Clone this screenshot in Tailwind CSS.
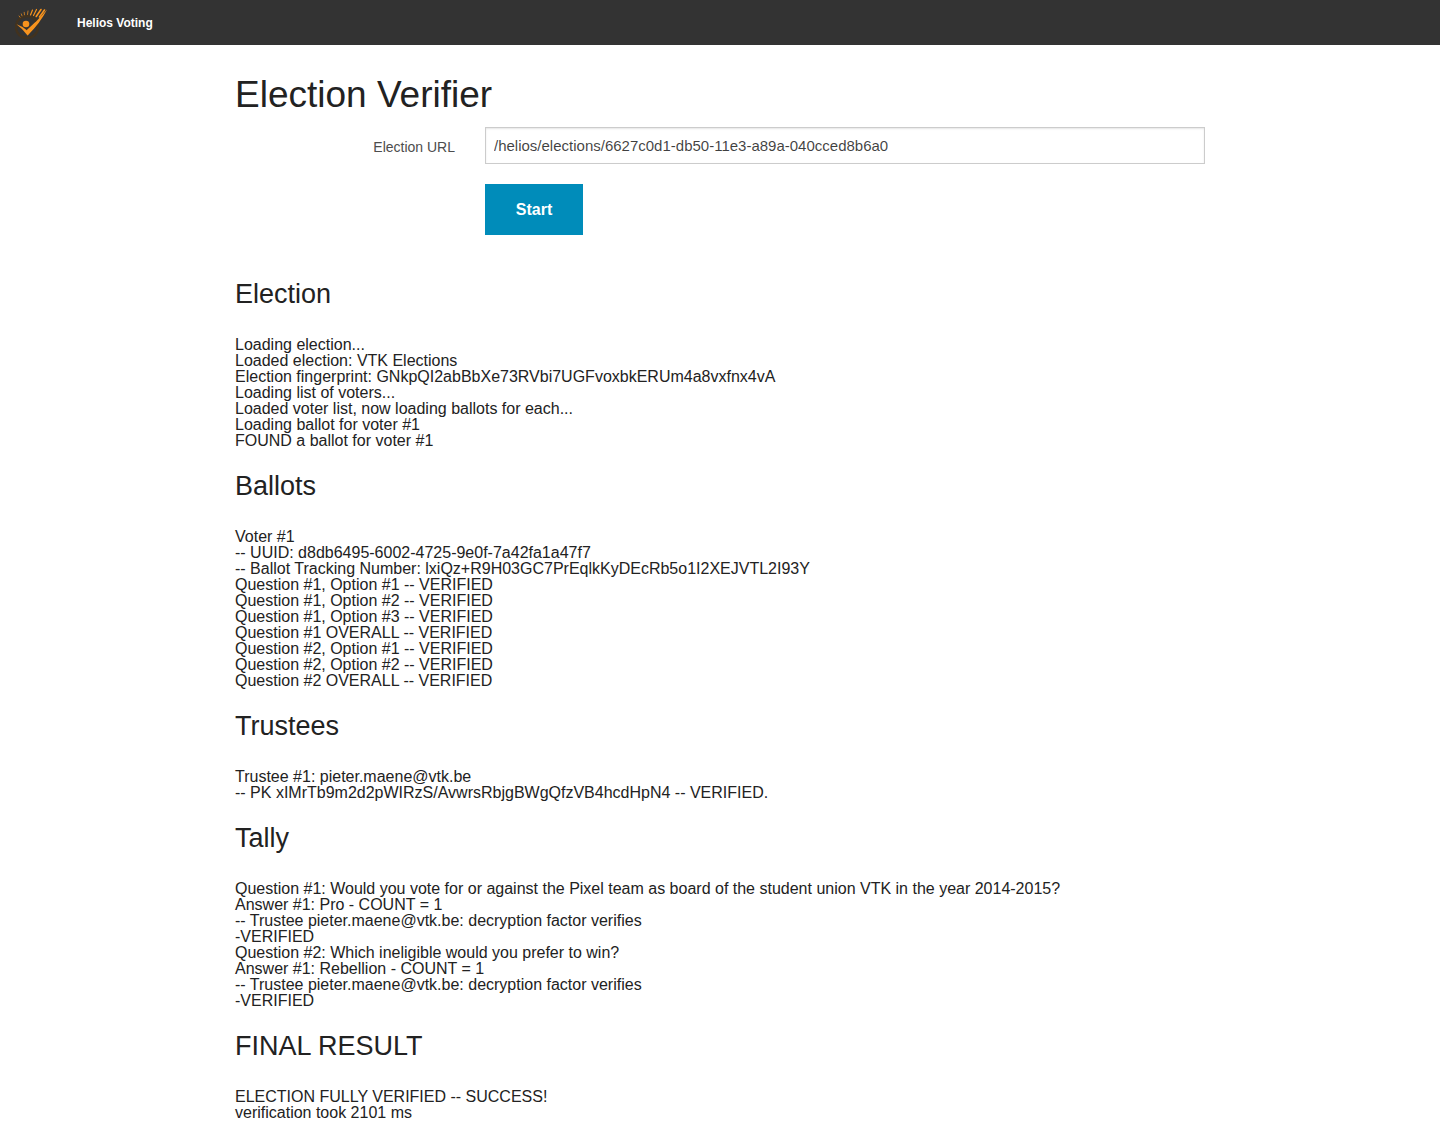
<!DOCTYPE html>
<html lang="en">
<head>
<meta charset="utf-8">
<meta name="viewport" content="width=device-width, initial-scale=1">
<title>Election Verifier</title>
<script src="https://cdn.jsdelivr.net/npm/@tailwindcss/browser@4"></script>
</head>
<body class="bg-white font-['Liberation_Sans',Arial,sans-serif] text-base text-[#222]">
<nav class="flex h-[45px] items-center bg-[#333]">
  <a href="#" aria-label="Helios" class="ml-[15px] h-[38px] w-[34px]">
    <svg class="h-[38px] w-[34px]" viewBox="0 0 34 38">
      <circle cx="12" cy="23" r="11" fill="none" stroke="#41321f" stroke-width="2.5"/>
      <circle cx="11" cy="20" r="3.3" fill="#f7931e"/>
      <path fill="#f7931e" d="M1.5 20.2Q7 22 11.8 26.2Q20 19.5 32 5.5Q25 19.5 12.5 31.5Q7.5 24.500 1.500 20.200Z"/>
      <path fill="#f7931e" d="M12 26L20 18.500L24 17.500L12.500 31.500Z"/>
      <g stroke="#f7931e" stroke-linecap="round" fill="none">
        <path stroke-width="1.6" d="M21.2 12.5L26 5.5M24.5 13L29.5 6"/>
        <path stroke-width="1.2" d="M18.5 11.5L21.5 5.5M15.5 11L17.5 6"/>
        <path stroke-width=".7" d="M12.5 10.5L13 7M9.5 10.8L9.2 8.3M7 11.8L6.3 9.9M5 13.2L4.1 12"/>
      </g>
    </svg>
  </a>
  <a href="#" class="ml-7 text-xs font-bold text-white">Helios Voting</a>
</nav>
<main class="mx-auto max-w-[1000px] px-[15px] pt-6 pb-5">
  <h1 class="mb-[6px] text-[37px] leading-[52px]">Election Verifier</h1>
  <form onsubmit="return false">
    <div class="grid grid-cols-[220px_1fr] gap-x-[30px] gap-y-5">
      <label for="url" class="pt-[10px] text-right text-sm text-[#4d4d4d]">Election URL</label>
      <input id="url" type="text" value="/helios/elections/6627c0d1-db50-11e3-a89a-040cced8b6a0" class="h-[37px] w-full border border-[#ccc] px-2 text-[15px] text-black/75 shadow-[inset_0_1px_2px_rgba(0,0,0,0.1)]">
      <button type="submit" class="col-start-2 h-[51px] w-[98px] bg-[#008cba] text-base font-bold text-white">Start</button>
    </div>
  </form>
  <section class="mt-10">
    <h2 class="mb-6 text-[27px] leading-[38px]">Election</h2>
    <div class="leading-4">
      <p>Loading election...</p>
      <p>Loaded election: VTK Elections</p>
      <p>Election fingerprint: GNkpQI2abBbXe73RVbi7UGFvoxbkERUm4a8vxfnx4vA</p>
      <p>Loading list of voters...</p>
      <p>Loaded voter list, now loading ballots for each...</p>
      <p>Loading ballot for voter #1</p>
      <p>FOUND a ballot for voter #1</p>
    </div>
  </section>
  <section class="mt-[18px]">
    <h2 class="mb-6 text-[27px] leading-[38px]">Ballots</h2>
    <div class="leading-4">
      <p>Voter #1</p>
      <p>-- UUID: d8db6495-6002-4725-9e0f-7a42fa1a47f7</p>
      <p>-- Ballot Tracking Number: lxiQz+R9H03GC7PrEqlkKyDEcRb5o1I2XEJVTL2I93Y</p>
      <p>Question #1, Option #1 -- VERIFIED</p>
      <p>Question #1, Option #2 -- VERIFIED</p>
      <p>Question #1, Option #3 -- VERIFIED</p>
      <p>Question #1 OVERALL -- VERIFIED</p>
      <p>Question #2, Option #1 -- VERIFIED</p>
      <p>Question #2, Option #2 -- VERIFIED</p>
      <p>Question #2 OVERALL -- VERIFIED</p>
    </div>
  </section>
  <section class="mt-[18px]">
    <h2 class="mb-6 text-[27px] leading-[38px]">Trustees</h2>
    <div class="leading-4">
      <p>Trustee #1: pieter.maene@vtk.be</p>
      <p>-- PK xIMrTb9m2d2pWIRzS/AvwrsRbjgBWgQfzVB4hcdHpN4 -- VERIFIED.</p>
    </div>
  </section>
  <section class="mt-[18px]">
    <h2 class="mb-6 text-[27px] leading-[38px]">Tally</h2>
    <div class="leading-4">
      <p>Question #1: Would you vote for or against the Pixel team as board of the student union VTK in the year 2014-2015?</p>
      <p>Answer #1: Pro - COUNT = 1</p>
      <p>-- Trustee pieter.maene@vtk.be: decryption factor verifies</p>
      <p>-VERIFIED</p>
      <p>Question #2: Which ineligible would you prefer to win?</p>
      <p>Answer #1: Rebellion - COUNT = 1</p>
      <p>-- Trustee pieter.maene@vtk.be: decryption factor verifies</p>
      <p>-VERIFIED</p>
    </div>
  </section>
  <section class="mt-[18px]">
    <h2 class="mb-6 text-[27px] leading-[38px]">FINAL RESULT</h2>
    <div class="leading-4">
      <p>ELECTION FULLY VERIFIED -- SUCCESS!</p>
      <p>verification took 2101 ms</p>
    </div>
  </section>
</main>
</body>
</html>
